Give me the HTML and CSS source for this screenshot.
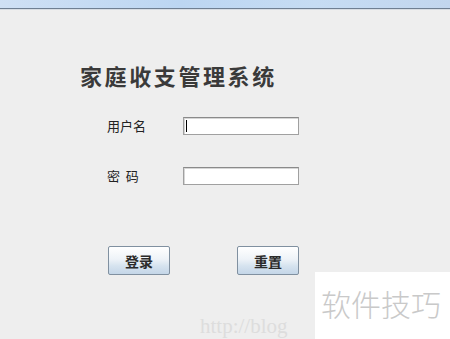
FILE: index.html
```html
<!DOCTYPE html>
<html>
<head>
<meta charset="utf-8">
<link rel="stylesheet" href="styles.css">
</head>
<body>
<div class="titlebar"></div>
<div class="frame">
  <h1 class="heading">家庭收支管理系统</h1>
  <div class="form">
    <label class="label">用户名</label>
    <div class="input caret"></div>
    <label class="label">密&nbsp;&nbsp;码</label>
    <div class="input"></div>
  </div>
  <div class="buttons">
    <button class="btn">登录</button>
    <button class="btn">重置</button>
  </div>
</div>
<div class="url">http://blog</div>
<div class="watermark">软件技巧</div>
</body>
</html>
```
FILE: styles.css
```css
html, body {
  margin: 0;
  padding: 0;
}
body {
  width: 450px;
  height: 339px;
  overflow: hidden;
  background: #eeeeee;
  font-family: "Noto Sans CJK SC", "Noto Sans", sans-serif;
  position: relative;
}
.titlebar {
  height: 8px;
  background: linear-gradient(90deg, #cfe0f4, #bcd6f2 40%, #c6dcf3 70%, #c2d6ee);
  border-bottom: 1px solid #6f7f92;
}
.frame {
  border-top: 1px solid #d8dde3;
  padding: 0 0 0 80px;
}
.heading {
  margin: 51px 0 0 0;
  font-size: 22px;
  line-height: 28px;
  font-weight: 700;
  color: #3a3a3a;
  letter-spacing: 2.6px;
}
.form {
  display: grid;
  grid-template-columns: 76px 116px;
  row-gap: 32px;
  margin: 28px 0 0 27px;
  align-items: center;
}
.label {
  font-size: 13px;
  line-height: 18px;
  color: #222;
}
.input {
  height: 16px;
  background: #fff;
  border: 1px solid #a0a0a0;
  border-top-color: #8a8a8a;
  box-shadow: inset 1px 1px 0 #d6d6d6;
  position: relative;
}
.caret::before {
  content: "";
  position: absolute;
  left: 2px;
  top: 2px;
  width: 1px;
  height: 12px;
  background: #000;
}
.buttons {
  display: flex;
  gap: 67px;
  margin: 61px 0 0 28px;
}
.btn {
  width: 62px;
  height: 29px;
  padding: 0;
  border: 1px solid #8090a0;
  border-radius: 2px;
  background: linear-gradient(180deg, #ffffff 0%, #eef3f8 45%, #d6e3ef 70%, #c4d6e8 100%);
  font-family: "Noto Sans CJK SC", sans-serif;
  font-size: 14px;
  font-weight: 700;
  color: #2a2a2a;
}
.watermark {
  position: absolute;
  left: 315px;
  top: 272px;
  width: 135px;
  height: 67px;
  background: #fff;
  color: #c9c9c9;
  font-size: 30px;
  font-weight: 300;
  line-height: 30px;
  padding: 16px 0 0 6px;
  box-sizing: border-box;
  white-space: nowrap;
}
.url {
  position: absolute;
  left: 200px;
  top: 314px;
  font-family: "Liberation Serif", serif;
  font-size: 21px;
  line-height: 24px;
  color: #dddddd;
  white-space: nowrap;
}
```
